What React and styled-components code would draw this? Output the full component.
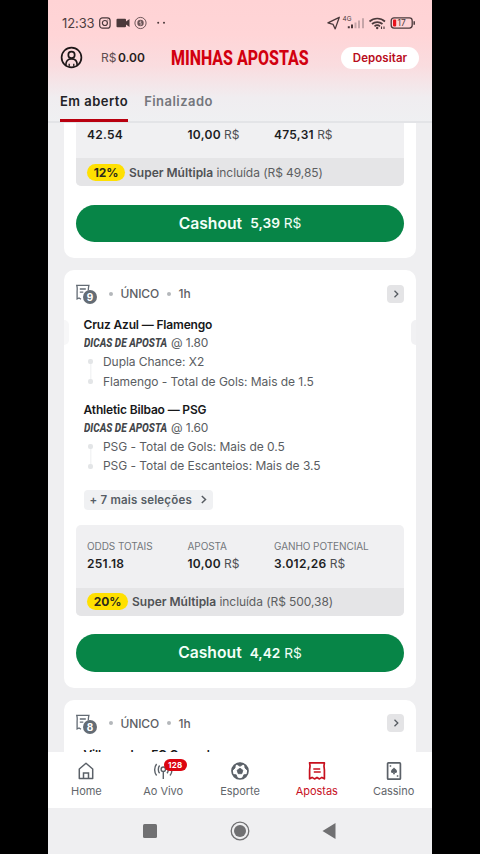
import React, { useState } from 'react';
import styled, { createGlobalStyle } from 'styled-components';

const GlobalStyle = createGlobalStyle`
  * {
    box-sizing: border-box;
  }
  body {
    margin: 0;
    background: #000;
    font-family: Inter, Roboto, sans-serif;
  }
  button {
    margin: 0;
    padding: 0;
    border: none;
    background: none;
    font-family: inherit;
    cursor: pointer;
  }
`;

const Phone = styled.div`
  display: flex;
  flex-direction: column;
  width: 384px;
  height: 854px;
  margin: 0 auto;
  overflow: hidden;
  background: #efeff1;
`;

const Header = styled.header`
  display: flex;
  flex-direction: column;
  flex: none;
  height: 123px;
  border-bottom: 2px solid #e3e4e7;
  background: linear-gradient(#ffd3d5 0, #ffd5d7 35px, #fadcdf 65px, #f0edf0 98px, #eff0f2 123px);
`;

const StatusBar = styled.div`
  display: flex;
  flex: none;
  justify-content: space-between;
  align-items: center;
  height: 32px;
  padding: 14px 16px 0 14px;
`;

const StatusGroup = styled.div`
  display: flex;
  align-items: center;
`;

const Clock = styled.span`
  width: 36.5px;
  font-size: 13px;
  line-height: 18px;
  letter-spacing: -0.1px;
  color: #4e3d3f;
`;

const TopBar = styled.div`
  display: flex;
  flex: none;
  align-items: center;
  height: 51px;
  padding: 0 13px 0 12px;
`;

const Balance = styled.span`
  width: 69.5px;
  margin-left: 18px;
  font-size: 12px;
  color: #5d4d50;
  b {
    margin-left: 1.5px;
    font-weight: 600;
    color: #281e20;
  }
`;

const PageTitle = styled.h1`
  width: 170.5px;
  margin: 0;
  font-family: Roboto, sans-serif;
  font-size: 20px;
  font-weight: 800;
  line-height: 24px;
  white-space: nowrap;
  color: #d2000f;
  transform: scaleX(0.797);
  transform-origin: left center;
`;

const Deposit = styled.button`
  width: 78px;
  height: 22px;
  border-radius: 11px;
  background: #fff;
  font-size: 11.5px;
  font-weight: 600;
  letter-spacing: 0.05px;
  color: #b90d1c;
`;

const Tabs = styled.div`
  display: flex;
  flex: none;
  gap: 16px;
  height: 39px;
  padding-left: 12px;
`;

const Tab = styled.button`
  height: 39px;
  border-bottom: 3px solid ${(p) => (p.$active ? '#b9000f' : 'transparent')};
  font-size: 13px;
  font-weight: 600;
  letter-spacing: 0.47px;
  color: ${(p) => (p.$active ? '#222226' : '#74767c')};
`;

const Feed = styled.main`
  display: flex;
  flex-direction: column;
  flex: 1;
  gap: 12px;
  min-height: 0;
  padding: 0 16px;
  overflow: hidden;
`;

const Card = styled.section`
  position: relative;
  flex: none;
  padding: ${(p) => (p.$cut ? '0 12px 16px' : '14px 12px 16px')};
  border-radius: ${(p) => (p.$cut ? '0 0 10px 10px' : '10px')};
  background: #fff;
`;

// ticket notches on both edges of the card
const Notch = styled.i`
  position: absolute;
  top: 50px;
  ${(p) => p.$side}: 0;
  width: 5px;
  height: 25px;
  border-radius: ${(p) => (p.$side === 'left' ? '0 6px 6px 0' : '6px 0 0 6px')};
  background: ${(p) => (p.$side === 'left' ? '#f7f7f8' : '#f1f1f3')};
`;

const CardHead = styled.div`
  display: flex;
  align-items: center;
  height: 19px;
  font-size: 12px;
  font-weight: 500;
  color: #5d6065;
`;

const SlipIcon = styled.div`
  position: relative;
  width: 33px;
  height: 19px;
`;

const SlipCount = styled.span`
  position: absolute;
  left: 7px;
  top: 6px;
  width: 14px;
  height: 14px;
  border-radius: 50%;
  background: #646c75;
  font-size: 10px;
  font-weight: 700;
  line-height: 14px;
  text-align: center;
  color: #fff;
`;

const Dot = styled.i`
  width: 4px;
  height: 4px;
  margin-right: ${(p) => p.$gap}px;
  border-radius: 50%;
  background: #b4b7bb;
`;

const Kind = styled.span`
  width: 46px;
  letter-spacing: -0.15px;
`;

const Open = styled.button`
  display: flex;
  align-items: center;
  justify-content: center;
  width: 17px;
  height: 18px;
  margin-left: auto;
  border-radius: 4px;
  background: #e4e4e6;
`;

const Match = styled.div`
  padding-left: 7.5px;
  margin-top: ${(p) => p.$top}px;
`;

const Teams = styled.div`
  height: 18px;
  font-size: 12px;
  font-weight: 600;
  line-height: 18px;
  letter-spacing: -0.16px;
  white-space: nowrap;
  color: #17181a;
`;

const Tip = styled.div`
  display: flex;
  height: 18px;
  font-size: 12px;
  line-height: 18px;
  letter-spacing: -0.15px;
  color: #5a5d62;
`;

const TipName = styled.span`
  width: 87.5px;
  font-family: Roboto, sans-serif;
  font-size: 12px;
  font-style: italic;
  font-weight: 800;
  letter-spacing: 0;
  white-space: nowrap;
  color: #44474b;
  transform: scaleX(0.84);
  transform-origin: left center;
`;

const Picks = styled.ul`
  display: flex;
  flex-direction: column;
  margin: 0;
  padding: 0;
  list-style: none;
`;

const Pick = styled.li`
  display: flex;
  align-items: center;
  height: 19.5px;
  font-size: 12px;
  letter-spacing: -0.05px;
  white-space: nowrap;
  color: #5a5d62;
`;

const PickMark = styled.span`
  display: flex;
  flex-direction: column;
  align-items: center;
  justify-content: ${(p) => (p.$last ? 'flex-end' : 'flex-start')};
  width: 14px;
  height: 19.5px;
  margin-right: 5.5px;
  background: linear-gradient(#f3f4f5, #f3f4f5) center ${(p) => (p.$last ? '0' : '100%')} / 1.5px 10px no-repeat;
  &::after {
    content: '';
    width: 5px;
    height: 5px;
    margin: 7px 0;
    border-radius: 2px;
    background: #e3e5e7;
  }
`;

const More = styled.button`
  display: flex;
  align-items: center;
  justify-content: space-between;
  width: 129.5px;
  height: 20px;
  margin: 14px 0 0 7.5px;
  padding: 0 5px 0 6px;
  border-radius: 4px;
  background: #f0f1f3;
  font-size: 11.5px;
  font-weight: 600;
  letter-spacing: 0.2px;
  white-space: nowrap;
  color: #565d65;
`;

const Summary = styled.div`
  margin-top: ${(p) => p.$top}px;
  border-radius: ${(p) => (p.$cut ? '0 0 5px 5px' : '5px')};
  overflow: hidden;
  background: #f0f0f2;
`;

const Figures = styled.div`
  display: grid;
  grid-template-columns: 100.5px 86.5px 1fr;
  height: ${(p) => (p.$cut ? 35 : 63)}px;
  padding: ${(p) => (p.$cut ? 2.5 : 13)}px 0 0 11px;
`;

const Label = styled.div`
  height: 17px;
  font-size: 10px;
  line-height: 16px;
  letter-spacing: -0.08px;
  white-space: nowrap;
  color: #73777c;
`;

const Value = styled.div`
  height: 17px;
  font-size: 12px;
  line-height: 17px;
  letter-spacing: -0.1px;
  color: #4d4f53;
  b {
    font-weight: 600;
    letter-spacing: 0.27px;
    color: #1c1d1f;
  }
`;

const Boost = styled.div`
  display: flex;
  align-items: center;
  height: 28px;
  padding-left: 11px;
  background: #e5e5e7;
  font-size: 12px;
  letter-spacing: -0.06px;
  white-space: pre;
  color: #5d5e61;
  b {
    font-weight: 600;
    letter-spacing: 0;
    color: #505255;
  }
`;

const Percent = styled.span`
  width: ${(p) => p.$w}px;
  height: 17px;
  margin-right: 4px;
  border-radius: 9px;
  background: #ffe000;
  font-size: 12px;
  font-weight: 700;
  line-height: 17px;
  text-align: center;
  color: #2b2a1c;
`;

const Cashout = styled.button`
  display: flex;
  align-items: center;
  justify-content: center;
  gap: 8px;
  width: 100%;
  height: 37.5px;
  margin-top: 18.5px;
  border-radius: 19px;
  background: #078547;
  font-size: 15.7px;
  font-weight: 600;
  color: #f3fff8;
  small {
    font-size: 13.7px;
    font-weight: 400;
  }
  small b {
    font-weight: 600;
  }
`;

const BottomNav = styled.nav`
  display: grid;
  grid-template-columns: repeat(5, 1fr);
  flex: none;
  height: 56px;
  background: #fff;
`;

const NavItem = styled.button`
  position: relative;
  display: flex;
  flex-direction: column;
  align-items: center;
  gap: 3px;
  padding-top: 9px;
  font-size: 11px;
  line-height: 14px;
  letter-spacing: -0.05px;
  color: ${(p) => (p.$active ? '#c7101e' : '#62666b')};
`;

const Badge = styled.span`
  position: absolute;
  left: 39px;
  top: 7px;
  width: 23px;
  height: 12px;
  border-radius: 6px;
  background: #dc0510;
  font-size: 8px;
  font-weight: 700;
  line-height: 12px;
  letter-spacing: 0.3px;
  text-align: center;
  color: #fff;
`;

const SystemBar = styled.div`
  display: flex;
  align-items: center;
  justify-content: center;
  gap: 70px;
  flex: none;
  height: 46px;
  background: #efeff1;
`;

const Chevron = ({ size = 8 }) => (
  <svg width={size} height={size} viewBox="0 0 8 8" fill="none" stroke="#565b61" strokeWidth="1.3">
    <path d="M2.5 0.8 5.8 4 2.5 7.2" />
  </svg>
);

const Slip = ({ count }) => (
  <SlipIcon>
    <svg width="17" height="18" viewBox="0 0 17 18" fill="none" stroke="#636b74" strokeWidth="1.3">
      <path d="M12.3 6.5c0-2 .2-3.5.6-5.2H.7C1.3 3 1.3 5 1.1 7v8l1.900-1 2 1.300M3.800 5h6M3.800 8.200h3.500" />
    </svg>
    <SlipCount>{count}</SlipCount>
  </SlipIcon>
);

const StatusIconsLeft = () => (
  <svg width="76" height="16" viewBox="0 0 76 16" fill="none" stroke="#4a393b" strokeWidth="1.2">
    <rect x="0.7" y="2.8" width="10.4" height="10.4" rx="2.8" />
    <circle cx="5.9" cy="8" r="2.5" />
    <circle cx="8.8" cy="5.1" r="0.5" fill="#4a393b" stroke="none" />
    <path d="M18.5 3.8H26a1 1 0 0 1 1 1v1.6L30.5 4v8L27 9.6v1.6a1 1 0 0 1-1 1h-7.5a1 1 0 0 1-1-1V4.8a1 1 0 0 1 1-1z" fill="#4a393b" stroke="none" />
    <circle cx="41.5" cy="8" r="5.6" strokeWidth="0.8" />
    <circle cx="41.5" cy="8" r="3.2" fill="#6b5658" stroke="none" />
    <path d="M40.8 6h1v1.5h-1.5M40.8 8h1.4v2h-1.4" stroke="#f9d3d5" strokeWidth="0.6" />
    <circle cx="59.2" cy="7.8" r="1" fill="#4a393b" stroke="none" />
    <circle cx="65" cy="7.8" r="1" fill="#4a393b" stroke="none" />
  </svg>
);

const StatusIconsRight = () => (
  <svg width="90" height="16" viewBox="0 0 90 16" fill="none">
    <path d="M1.9 7.8 13.3 2.3 9.2 13.9 7.1 9.4z" stroke="#4a393b" strokeWidth="1.3" strokeLinejoin="round" />
    <text x="16.5" y="6.4" fontFamily="Inter, sans-serif" fontSize="6.4" fill="#4a393b">4G</text>
    <path d="M22.8 11.2v2M26 9.6v3.6" stroke="#4a393b" strokeWidth="2" />
    <path d="M29.5 7.6v5.6M33 5.6v7.6M37 3.2v10" stroke="#c5a5a8" strokeWidth="2" />
    <path d="M43.5 6.5c4.5-4 11-4 15.5 0M46 9c3-2.6 7.5-2.6 10.5 0M48.5 11.3c1.6-1.3 3.9-1.3 5.5 0" stroke="#4a393b" strokeWidth="1.7" />
    <circle cx="51.2" cy="13" r="1.2" fill="#4a393b" />
    <path d="M55.5 11.5V14M58 11.5V14" stroke="#4a393b" strokeWidth="1.1" />
    <rect x="65.2" y="2.9" width="21" height="10.2" rx="2.8" stroke="#4a393b" strokeWidth="1.3" />
    <rect x="67" y="4.6" width="3.2" height="6.8" rx="0.8" fill="#e8121b" />
    <path d="M88.2 6.3v3.4" stroke="#4a393b" strokeWidth="1.5" />
    <text x="71.6" y="11" fontFamily="Inter, sans-serif" fontSize="8.4" fill="#4a393b">17</text>
  </svg>
);

const Avatar = () => (
  <svg width="23" height="23" viewBox="0 0 23 23" fill="none" stroke="#1d1718" strokeWidth="1.7">
    <circle cx="11.5" cy="11.5" r="9.9" />
    <circle cx="11.5" cy="8.9" r="3.2" />
    <path d="M5.8 19.2c0-4 2-6.3 5.7-6.3s5.7 2.3 5.7 6.3" />
    <path d="M9.2 20.5v-2.7M13.8 20.5v-2.7" strokeWidth="1.3" />
  </svg>
);

const icons = {
  home: (
    <svg width="20" height="20" viewBox="0 0 20 20" fill="none" stroke="#5b6168" strokeWidth="1.5">
      <path d="M3.3 8 10 2.3 16.7 8v9.4H3.3z" strokeLinejoin="round" />
      <path d="M7.5 17.4V12h5v5.4" />
    </svg>
  ),
  live: (
    <svg width="20" height="20" viewBox="0 0 20 20" fill="none" stroke="#5b6168" strokeWidth="1.4">
      <circle cx="10.3" cy="8.2" r="2.2" />
      <path d="M10.3 10.4V18M6.6 4.5c-1.7 2-1.7 5.8 0 7.8M14 4.5c1.7 2 1.7 5.8 0 7.8M3.6 3C1 6.3 1 11.4 3.6 14.5M17 3c2.6 3.3 2.6 8.4 0 11.5" />
    </svg>
  ),
  ball: (
    <svg width="20" height="20" viewBox="0 0 20 20" fill="none" stroke="#5b6168" strokeWidth="1.7">
      <circle cx="10" cy="10" r="8" />
      <path d="M10 7.2 12.9 9.3 11.8 12.7H8.2L7.1 9.3zM6.5 3l3.5 2.3L13.5 3 10 2.1zM2.3 9.5 5 7 5.3 4.2 3 6zM17.7 9.5 15 7l-.3-2.8L17 6zM3.2 13.5l3 .3 1.3 3.4-2.5-1.2zM16.8 13.5l-3 .3-1.3 3.4 2.5-1.2z" fill="#5b6168" strokeWidth="0.8" />
    </svg>
  ),
  bets: (
    <svg width="20" height="20" viewBox="0 0 20 20" fill="none" stroke="#c7101e" strokeWidth="1.7">
      <path d="M2.6 1.9h14.8c-.6 2-.6 4.500 0 7v8.900l-2.500-1.400-2.400 1.500-2.500-1.500-2.500 1.500-2.400-1.500-2.500 1.400V8.900c.6-2.500.6-5 0-7z" strokeLinejoin="round" />
      <path d="M6.300 7.900h6.900M6.800 11h6.900" strokeWidth="1.5" />
    </svg>
  ),
  casino: (
    <svg width="20" height="20" viewBox="0 0 20 20" fill="none" stroke="#5b6168" strokeWidth="1.7">
      <rect x="3.6" y="1.9" width="12.8" height="16.3" rx="0.8" />
      <path d="M10 6.5c1 1.3 3 2.3 3 3.9 0 1.4-1.5 1.9-2.5 1.1l.6 1.7H8.900l.6-1.7c-1 .8-2.500.3-2.500-1.100 0-1.600 2-2.600 3-3.900z" fill="#5b6168" stroke="none" />
      <path d="M5.7 5h1.5M12.800 15h1.500" strokeWidth="1.3" />
    </svg>
  ),
};

const NAV = [
  { id: 'home', label: 'Home' },
  { id: 'live', label: 'Ao Vivo', badge: 128 },
  { id: 'ball', label: 'Esporte' },
  { id: 'bets', label: 'Apostas' },
  { id: 'casino', label: 'Cassino' },
];

const MATCHES = [
  { teams: 'Cruz Azul — Flamengo', odd: '1.80', picks: ['Dupla Chance: X2', 'Flamengo - Total de Gols: Mais de 1.5'] },
  { teams: 'Athletic Bilbao — PSG', odd: '1.60', picks: ['PSG - Total de Gols: Mais de 0.5', 'PSG - Total de Escanteios: Mais de 3.5'] },
];

function BetHead({ count }) {
  return (
    <CardHead>
      <Slip count={count} />
      <Dot $gap={7.5} />
      <Kind>ÚNICO</Kind>
      <Dot $gap={8} />
      <span>1h</span>
      <Open><Chevron /></Open>
    </CardHead>
  );
}

function BetFoot({ cut, top, odds, gain, percent, bonus, cashout }) {
  return (
    <>
      <Summary $cut={cut} $top={top}>
        <Figures $cut={cut}>
          <div>
            {!cut && <Label>ODDS TOTAIS</Label>}
            <Value><b>{odds}</b></Value>
          </div>
          <div>
            {!cut && <Label>APOSTA</Label>}
            <Value><b>10,00</b> R$</Value>
          </div>
          <div>
            {!cut && <Label>GANHO POTENCIAL</Label>}
            <Value><b>{gain}</b> R$</Value>
          </div>
        </Figures>
        <Boost>
          <Percent $w={percent === '12%' ? 38 : 41}>{percent}</Percent>
          <b>Super Múltipla</b> incluída (R$ {bonus})
        </Boost>
      </Summary>
      <Cashout>
        Cashout <small><b>{cashout}</b> R$</small>
      </Cashout>
    </>
  );
}

function App() {
  const [tab, setTab] = useState('Em aberto');
  const [page, setPage] = useState('bets');

  return (
    <>
      <GlobalStyle />
      <Phone>
        <Header>
          <StatusBar>
            <StatusGroup>
              <Clock>12:33</Clock>
              <StatusIconsLeft />
            </StatusGroup>
            <StatusIconsRight />
          </StatusBar>
          <TopBar>
            <Avatar />
            <Balance>R$<b>0.00</b></Balance>
            <PageTitle>MINHAS APOSTAS</PageTitle>
            <Deposit>Depositar</Deposit>
          </TopBar>
          <Tabs>
            {['Em aberto', 'Finalizado'].map((name) => (
              <Tab key={name} $active={tab === name} onClick={() => setTab(name)}>{name}</Tab>
            ))}
          </Tabs>
        </Header>

        <Feed>
          <Card $cut>
            <BetFoot cut top={0} odds="42.54" gain="475,31" percent="12%" bonus="49,85" cashout="5,39" />
          </Card>

          <Card>
            <Notch $side="left" />
            <Notch $side="right" />
            <BetHead count={9} />
            {MATCHES.map((m, i) => (
              <Match key={m.teams} $top={i ? 9.5 : 13}>
                <Teams>{m.teams}</Teams>
                <Tip><TipName>DICAS DE APOSTA</TipName>@ {m.odd}</Tip>
                <Picks>
                  {m.picks.map((pick, n) => (
                    <Pick key={pick}><PickMark $last={n === 1} />{pick}</Pick>
                  ))}
                </Picks>
              </Match>
            ))}
            <More>+ 7 mais seleções <Chevron size={9} /></More>
            <BetFoot top={15} odds="251.18" gain="3.012,26" percent="20%" bonus="500,38" cashout="4,42" />
          </Card>

          <Card>
            <BetHead count={8} />
            <Match $top={13}>
              <Teams>Villarreal — FC Copenhagen</Teams>
            </Match>
          </Card>
        </Feed>

        <BottomNav>
          {NAV.map((item) => (
            <NavItem key={item.id} $active={page === item.id} onClick={() => setPage(item.id)}>
              {icons[item.id]}
              {item.badge && <Badge>{item.badge}</Badge>}
              {item.label}
            </NavItem>
          ))}
        </BottomNav>

        <SystemBar>
          <svg width="20" height="20" viewBox="0 0 20 20" fill="#707072">
            <rect x="3" y="3" width="14" height="14" rx="1.5" />
          </svg>
          <svg width="20" height="20" viewBox="0 0 20 20" fill="#707072">
            <circle cx="10" cy="10" r="6" />
            <circle cx="10" cy="10" r="8.8" fill="none" stroke="#707072" strokeWidth="1.3" />
          </svg>
          <svg width="20" height="20" viewBox="0 0 20 20" fill="#707072">
            <path d="M2.5 10 15.5 2v16z" />
          </svg>
        </SystemBar>
      </Phone>
    </>
  );
}

export default App;
